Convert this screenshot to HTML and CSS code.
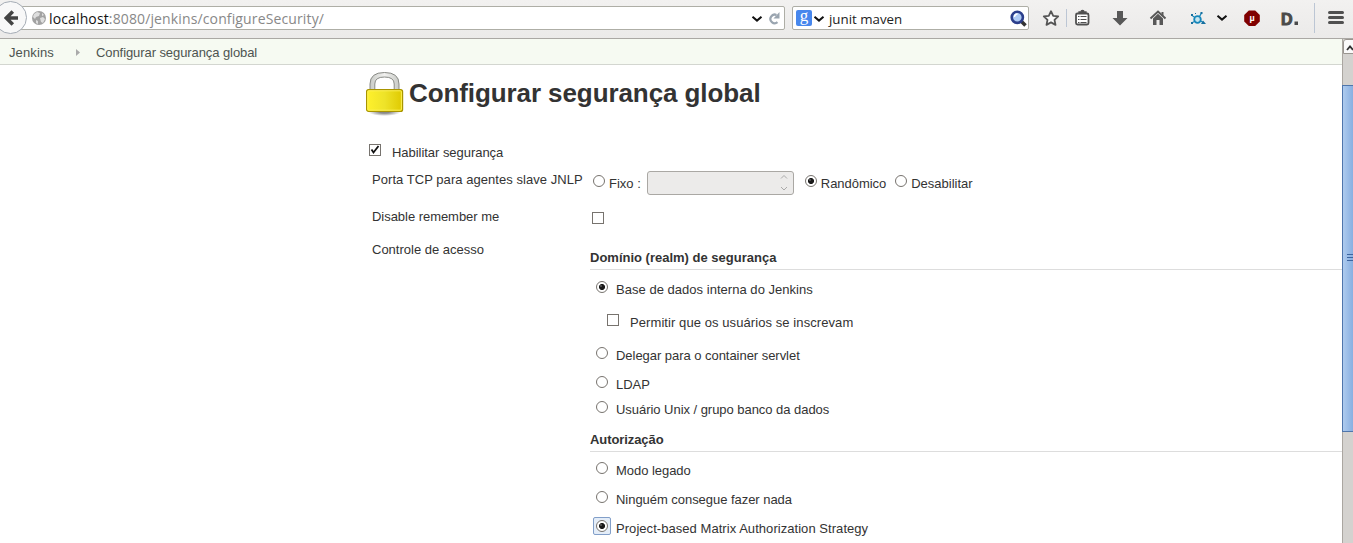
FILE: index.html
```
<!DOCTYPE html>
<html lang="pt-BR">
<head>
<meta charset="utf-8">
<title>Configurar segurança global</title>
<link rel="stylesheet" href="styles.css">
</head>
<body>
<header class="toolbar">
  <div class="back"><svg width="15" height="16" viewBox="0 0 15 16"><path d="M14 8H3M8.800 1.500L2.300 8l6.500 6.500" fill="none" stroke="#444" stroke-width="3.600"/></svg></div>
  <div class="address">
    <svg class="globe" width="14" height="14" viewBox="0 0 14 14"><circle cx="7" cy="7" r="7" fill="#a2a2a2"/><path d="M2 3l3-2 3 1-1 3-3 1-1 2-2-2zM8 7l3-1 2 2-2 4-2-1zM10 2l2 2-2 1zM4 9l2 1v3l-2-1z" fill="#dedede"/></svg>
    <span class="url"><b>localhost</b>:8080/jenkins/configureSecurity/</span>
    <svg class="chev" width="12" height="8" viewBox="0 0 12 8"><path d="M1.500 1.800L6 5.600l4.500-3.800" fill="none" stroke="#111" stroke-width="2"/></svg>
    <svg class="reload" width="12" height="13" viewBox="0 0 12 13"><path d="M9.500 10.200A4.300 4.300 0 1 1 8.500 3" fill="none" stroke="#9aa5b0" stroke-width="2.200"/><path d="M11.500 0v6.500H5.500z" fill="#9aa5b0"/></svg>
  </div>
  <div class="search">
    <span class="engine">g</span>
    <svg class="chev2" width="12" height="8" viewBox="0 0 12 8"><path d="M1.500 1.800L6 5.600l4.500-3.800" fill="none" stroke="#111" stroke-width="2"/></svg>
    <span class="query">junit maven</span>
    <svg width="17" height="17" viewBox="0 0 17 17"><path d="M11 11l4.500 4.500" stroke="#333" stroke-width="3.500"/><circle cx="7.300" cy="7.300" r="5.600" fill="#aecbf5" stroke="#2c3f8c" stroke-width="2.600"/><path d="M4.500 7a3 3 0 0 1 3-3" fill="none" stroke="#fff" stroke-width="1.500"/></svg>
  </div>
  <svg class="tools" width="324" height="38" viewBox="1029 0 324 38">
    <path d="M1051 11.200l2.200 4.600 5 .6-3.700 3.500 1 5-4.500-2.500-4.500 2.500 1-5-3.700-3.500 5-.6z" fill="#fafafa" stroke="#555" stroke-width="1.800" stroke-linejoin="round"/>
    <path d="M1066.500 9v18" stroke="#bcc6d4"/>
    <rect x="1076" y="13.500" width="12.500" height="11" rx="1.500" fill="#fff" stroke="#505050" stroke-width="1.800"/><path d="M1079 13v-1h2a1.500 1.500 0 0 1 3 0h2v1z" fill="#505050" stroke="#505050" stroke-width="1.300"/><path d="M1078 16.500h1.500m1 0h6M1078 19.500h1.500m1 0h6M1078 22.500h1.500m1 0h6" stroke="#505050"/>
    <path d="M1117 11h6v7h4.500l-7.500 7.500-7.500-7.500h4.500z" fill="#585858"/>
    <path d="M1150.500 18.500l7.500-7 7.500 7" fill="none" stroke="#585858" stroke-width="2"/><path d="M1161.500 12h2v4h-2zM1153 18.500l5-4.700 5 4.700V25h-3.500v-5h-3v5H1153z" fill="#585858"/>
    <g fill="none" stroke="#1686ba"><circle cx="1197.500" cy="19.500" r="3.300" fill="#c7e5ef" stroke-width="1.800"/><path d="M1199.500 16.500l2-3.500M1194.500 17l-2-1M1194.500 21.500l-2 1M1200.500 21l3 1.500" stroke-width="1.300"/></g><path d="M1200.500 12h2v2h-2zM1191 14h2v2h-2zM1191 22h2v2h-2zM1203 20.500l3 3.500h-5zM1195 13h1v1h-1z" fill="#1670a0"/>
    <path d="M1217.500 15.800l4.500 3.800 4.500-3.800" fill="none" stroke="#111" stroke-width="2"/>
    <path d="M1248.800 10.500h6.400l4.600 4.600v6.300l-4.600 4.600h-6.400l-4.600-4.600v-6.300z" fill="#800000"/><text x="1252" y="21" class="mu" text-anchor="middle">µ</text>
    <text x="1281" y="24.500" class="dee">D</text><path d="M1294.500 21.500h3.500V25h-3.500z" fill="#4a4a4a"/>
    <path d="M1314.500 3v30" stroke="#bcc6d4"/>
    <path d="M1329.500 12.500h13M1329.500 17.500h13M1329.500 22.500h13" stroke="#505050" stroke-width="3" stroke-linecap="round"/>
  </svg>
</header>
<div class="view">
  <main class="page">
    <nav class="crumbs"><span class="c1">Jenkins</span><svg width="4" height="7" viewBox="0 0 4 7"><path d="M0 0l4 3.500L0 7z" fill="#aaa"/></svg><span class="c2">Configurar segurança global</span></nav>
    <div class="content">
      <h1><svg width="40" height="46" viewBox="0 0 40 46">
        <defs><linearGradient id="body"><stop offset="0" stop-color="#fff12c"/><stop offset=".5" stop-color="#eee329"/><stop offset="1" stop-color="#dfc900"/></linearGradient><linearGradient id="steel"><stop offset="0" stop-color="#c9cbc7"/><stop offset=".5" stop-color="#f1f1ef"/><stop offset="1" stop-color="#c9cbc7"/></linearGradient><radialGradient id="shade"><stop offset=".3" stop-color="#888"/><stop offset="1" stop-color="#fff"/></radialGradient></defs>
        <ellipse cx="18.500" cy="41" rx="16" ry="4" fill="url(#shade)"/>
        <path d="M4 21V13Q4 1.500 18.500 1.500T33 13v8h-4.800v-8Q28.200 6 18.500 6T8.800 13v8z" fill="url(#steel)" stroke="#888a85"/>
        <rect x=".6" y="18.600" width="36" height="21.800" rx="2" fill="url(#body)" stroke="#a89400" stroke-width="1.200"/><rect x="1.800" y="19.800" width="33.600" height="19.400" rx="1" fill="none" stroke="#fff45c" stroke-width=".9"/>
      </svg><span>Configurar segurança global</span></h1>
      <div class="enable"><i class="box"><svg width="12" height="12" viewBox="0 0 12 12"><path d="M2.500 5.500l2 3L9.500 2" fill="none" stroke="#111" stroke-width="1.800"/></svg></i><span class="t0">Habilitar segurança</span></div>
      <div class="form">
        <div class="label port-label"><span class="t1">Porta TCP para agentes slave JNLP</span></div>
        <div class="port">
          <i class="radio"></i><span class="t2">Fixo :</span>
          <div class="number"><svg width="8" height="18" viewBox="0 0 8 18"><path d="M1 4.500l3-3 3 3M1 13l3 3 3-3" fill="none" stroke="#aaa"/></svg></div>
          <i class="radio on"></i><span class="t3">Randômico</span>
          <i class="radio off"></i><span class="t4">Desabilitar</span>
        </div>
        <div class="label remember-label"><span class="t5">Disable remember me</span></div>
        <div class="remember"><i class="box"></i></div>
        <div class="label"><span class="t6">Controle de acesso</span></div>
        <div class="access">
          <h2><span class="t7">Domínio (realm) de segurança</span></h2>
          <div class="option first"><i class="radio on"></i><span class="t8">Base de dados interna do Jenkins</span></div>
          <div class="option nested"><i class="box"></i><span class="t9">Permitir que os usuários se inscrevam</span></div>
          <div class="option wide"><i class="radio"></i><span class="t10">Delegar para o container servlet</span></div>
          <div class="option"><i class="radio"></i><span class="t11">LDAP</span></div>
          <div class="option tight"><i class="radio"></i><span class="t12">Usuário Unix / grupo banco da dados</span></div>
          <h2 class="auth"><span class="t13">Autorização</span></h2>
          <div class="option second"><i class="radio"></i><span class="t14">Modo legado</span></div>
          <div class="option"><i class="radio"></i><span class="t15">Ninguém consegue fazer nada</span></div>
          <div class="option chosen"><b class="focus"><i class="radio on"></i></b><span class="t16">Project-based Matrix Authorization Strategy</span></div>
        </div>
      </div>
    </div>
  </main>
  <aside class="scroll">
    <div class="up"><svg width="8" height="6" viewBox="0 0 8 6"><path d="M1 5l3-3.500L7 5" fill="none" stroke="#333" stroke-width="1.800"/></svg></div>
    <div class="thumb"><b></b><b></b><b></b></div>
  </aside>
</div>
</body>
</html>
```
FILE: styles.css
```
* { box-sizing: border-box; }
body { margin: 0; height: 543px; overflow: hidden; background: #fff; color: #333; font: 13px/16px "Liberation Sans", Arial, sans-serif; }
span { white-space: nowrap; }
svg { flex: none; display: block; }
.toolbar { display: flex; height: 39px; background: linear-gradient(#f2f1f0, #ebeae9); border-bottom: 1px solid #aaa8a4; }
.back { position: relative; z-index: 1; flex: none; width: 33px; height: 33px; margin: 1px 0 0 -6px; padding: 8px 0 0 9px; border: 1px solid #a5acb5; border-radius: 50%; background: #f8f8f8; }
.address { display: flex; align-items: flex-start; flex: none; width: 767px; height: 24px; margin: 6px 0 0 -9px; padding-left: 13px; background: #fff; border: 1px solid #aeaea6; border-radius: 2px; }
.globe { margin-top: 4px; }
.url { width: 708px; margin-left: 3px; font: 14px/24px "Open Sans", sans-serif; letter-spacing: .13px; color: #888; }
.url b { font-weight: 400; color: #111; }
.chev { margin: 8px 0 0 -6px; }
.reload { margin: 5px 0 0 5px; }
.search { display: flex; flex: none; width: 237px; height: 24px; margin: 6px 0 0 7px; padding: 3px 0 0 3px; background: #fff; border: 1px solid #aeaea6; border-radius: 2px; }
.engine { width: 16px; height: 16px; background: #4787ed; border-radius: 2px; color: #fff; font: 17px/12px "Liberation Serif", serif; text-align: center; }
.chev2 { margin: 5px 0 0 1px; }
.query { width: 181px; margin: -3px 0 0 4px; color: #222; font: 13.3px/24px "Open Sans", sans-serif; letter-spacing: 0; }
.mu { font: bold 9px "Liberation Sans", sans-serif; fill: #fff; }
.dee { font: bold 16px "Liberation Sans", sans-serif; fill: #4a4a4a; stroke: #4a4a4a; }
.view { display: flex; height: 504px; }
.page { flex: none; width: 1342px; }
.crumbs { display: flex; height: 26px; padding: 6px 0 0 9px; background: #f6faf2; border-bottom: 1px solid #d3d6d0; color: #4d5450; }
.crumbs svg { margin: 4px 16px 0 0; }
.c1 { width: 67px; letter-spacing: .12px; }
.c2 { letter-spacing: -.08px; }
.content { padding-left: 366px; }
h1 { display: flex; height: 76px; margin: 0; padding-top: 6px; font-size: 26px; line-height: 30px; letter-spacing: -.09px; }
h1 span { margin: 7px 0 0 3px; }
.enable { display: flex; height: 31px; padding: 4px 0 0 3px; }
.enable .box { margin: -1px 11px 0 0; }
.form { display: grid; grid-template-columns: 224px 752px; }
.label { padding-left: 6px; }
.port { display: flex; height: 37px; padding: 4px 0 0 3px; }
.port .radio { margin: -1px 4px 0 0; }
.number { display: flex; justify-content: flex-end; width: 147px; height: 24px; margin: -5px 11px 0 6px; padding: 2px 5px; background: #ecebea; border: 1px solid #aaa8a4; border-radius: 3px; }
.port .off { margin-left: 9px; }
.remember { height: 33px; padding: 3px 0 0 2px; }
.box, .radio { display: block; flex: none; width: 12px; height: 12px; background: #fff; border: 1px solid #77736e; }
.box svg { margin: -1px; }
.radio { border-radius: 50%; }
.radio.on { background: radial-gradient(circle at 4px 4px, #777 0, transparent 1.5px), radial-gradient(circle, #1a1a1a 0 2.6px, #fff 3.500px); }
.focus { flex: none; width: 18px; height: 18px; margin: -4px 5px -2px -3px; padding: 2px; background: #e4edf8; border: 1px solid #829fc9; border-radius: 2px; }
.focus .radio { margin: 0; }
h2 { height: 28px; margin: 0; padding-top: 8px; border-bottom: 1px solid #ddd; font-size: 13px; line-height: 16px; }
.option { display: flex; height: 16px; margin-top: 13px; padding-left: 6px; }
.option > i { margin: -1px 8px 0 0; }
.first { margin-top: 12px; }
.nested { margin-top: 17px; padding-left: 17px; }
.nested > i { margin-right: 11px; }
.wide { margin-top: 17px; }
.tight { margin-top: 9px; }
h2.auth { margin-top: 6px; }
.second { margin-top: 11px; }
.t0, .t3, .t5, .t10, .t12, .t14, .t15 { letter-spacing: -.04px; }
.t1, .t16 { letter-spacing: .05px; }
.t8 { letter-spacing: .03px; }
.t9 { letter-spacing: .08px; }
.t13 { letter-spacing: -.08px; }
.scroll { flex: none; width: 11px; background: #d4d2cf; border-left: 1px solid #aaa6a1; }
.up { width: 20px; height: 15px; padding: 5px 0 0 2px; background: #fafafa; border: 1px solid #99958f; border-radius: 3px 0 0; }
.thumb { width: 20px; height: 347px; margin: 31px 0 0 -1px; padding-top: 168px; background: linear-gradient(90deg, #aecbee, #85ade0 60%); border: 1px solid #4f76ac; }
.thumb b { display: block; width: 8px; height: 1px; margin: 0 0 2px 4px; background: #3d65a0; }
```
